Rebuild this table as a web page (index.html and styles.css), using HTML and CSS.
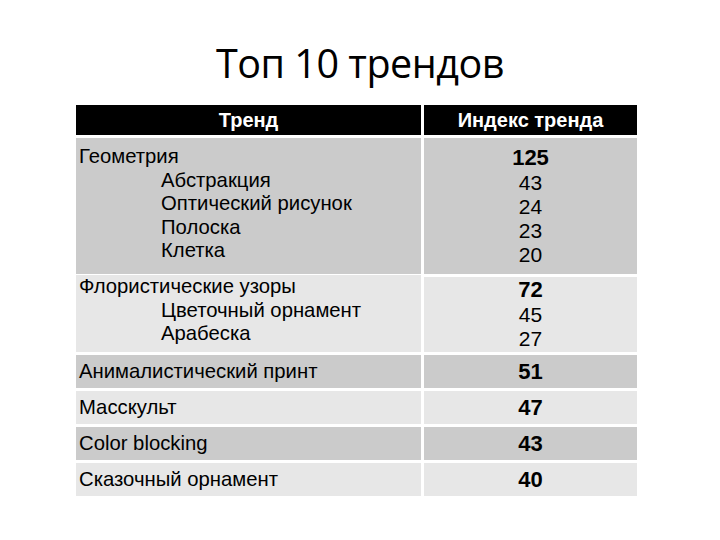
FILE: index.html
```html
<!DOCTYPE html>
<html lang="ru">
<head>
<meta charset="utf-8">
<title>Топ 10 трендов</title>
<link rel="stylesheet" href="styles.css">
</head>
<body>
<div class="slide">
  <h1 class="title">Топ 10 трендов</h1>
  <div class="table">
    <div class="cell head">Тренд</div>
    <div class="cell head">Индекс тренда</div>

    <div class="cell name dark r1">
      <div class="main">Геометрия</div>
      <div class="sub">Абстракция</div>
      <div class="sub">Оптический рисунок</div>
      <div class="sub">Полоска</div>
      <div class="sub">Клетка</div>
    </div>
    <div class="cell num dark r1">
      <div class="big">125</div>
      <div class="small">43</div>
      <div class="small">24</div>
      <div class="small">23</div>
      <div class="small">20</div>
    </div>

    <div class="cell name light r2">
      <div class="main">Флористические узоры</div>
      <div class="sub">Цветочный орнамент</div>
      <div class="sub">Арабеска</div>
    </div>
    <div class="cell num light r2">
      <div class="big">72</div>
      <div class="small">45</div>
      <div class="small">27</div>
    </div>

    <div class="cell name dark single">Анималистический принт</div>
    <div class="cell num dark single"><div class="big">51</div></div>

    <div class="cell name light single">Масскульт</div>
    <div class="cell num light single"><div class="big">47</div></div>

    <div class="cell name dark single">Color blocking</div>
    <div class="cell num dark single"><div class="big">43</div></div>

    <div class="cell name light single">Сказочный орнамент</div>
    <div class="cell num light single"><div class="big">40</div></div>
  </div>
</div>
</body>
</html>
```

FILE: styles.css
```css
html, body {
  margin: 0;
  padding: 0;
  background: #ffffff;
}

.slide {
  width: 720px;
  height: 540px;
  padding-top: 36px;
  box-sizing: border-box;
}

.title {
  margin: 0;
  height: 69px;
  text-align: center;
  font-family: "Open Sans", "Liberation Sans", sans-serif;
  font-weight: 400;
  font-size: 39.5px;
  line-height: 54px;
  color: #000000;
  letter-spacing: -0.5px;
}

.table {
  margin-left: 76px;
  width: 561px;
  display: grid;
  grid-template-columns: 345px 213px;
  grid-template-rows: 30px 136px 75px 33px 33px 33px 33px;
  column-gap: 3px;
  row-gap: 3px;
  font-family: "Liberation Sans", Arial, sans-serif;
  color: #000000;
}

.cell {
  box-sizing: border-box;
}

.head {
  background: #000000;
  color: #ffffff;
  font-weight: 700;
  font-size: 20px;
  text-align: center;
  display: flex;
  align-items: center;
  justify-content: center;
}

.dark { background: #cbcbcb; }
.light { background: #e7e7e7; }

.name {
  font-size: 20.3px;
  padding-left: 3px;
}

.name .main,
.name .sub {
  line-height: 23.5px;
}

.name .sub {
  padding-left: 82px;
}

.r1.name { padding-top: 7px; }
.r2.name { padding-top: 0px; margin-top: -2px; }

.num {
  text-align: center;
}

.num .big {
  font-weight: 700;
  font-size: 22px;
  line-height: 26px;
}

.num .small {
  font-size: 21px;
  line-height: 24px;
}

.r1.num { padding-top: 7px; }
.r2.num { padding-top: 0px; }

.single {
  display: flex;
  align-items: center;
}

.num.single {
  justify-content: center;
}
```
